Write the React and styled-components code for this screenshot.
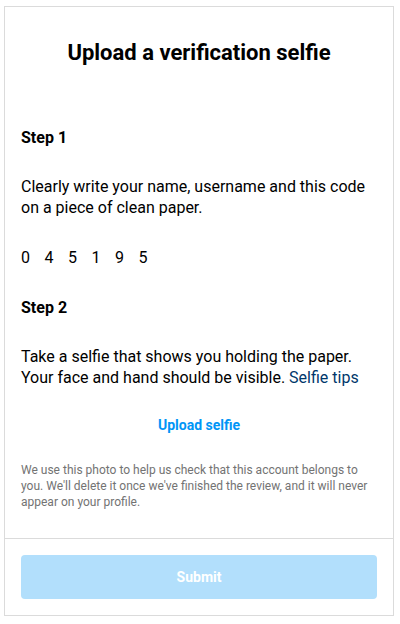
import React from "react";
import styled, { createGlobalStyle } from "styled-components";

const Global = createGlobalStyle`
  body {
    margin: 0;
    background: #fff;
    font-family: Roboto, "Liberation Sans", sans-serif;
    color: #000;
  }
`;

const Page = styled.div`
  padding: 6px 6px 8px 4px;
`;

const Card = styled.div`
  border: 1px solid #dbdbdb;
  height: 610px;
  box-sizing: border-box;
  display: flex;
  flex-direction: column;
`;

const Body = styled.div`
  flex-grow: 1;
  padding: 0 16px;
`;

const Title = styled.h1`
  margin: 0;
  padding: 33px 0 0;
  font-size: 22px;
  font-weight: 700;
  text-align: center;
  line-height: 26px;
`;

const StepTitle = styled.h2`
  margin: ${(p) => p.top}px 0 0;
  font-size: 16px;
  font-weight: 700;
  line-height: 20px;
`;

const Text = styled.p`
  margin: 28px 0 0;
  font-size: 16px;
  line-height: 21px;
`;

const Link = styled.a`
  color: #00376b;
  text-decoration: none;
`;

const Code = styled.div`
  margin-top: 30px;
  font-size: 16px;
  line-height: 20px;
  letter-spacing: 14.5px;
`;

const UploadButton = styled.button`
  display: block;
  margin: 29px auto 0;
  border: 0;
  background: transparent;
  padding: 0;
  font-family: inherit;
  font-size: 14px;
  font-weight: 700;
  color: #0095f6;
  cursor: pointer;
`;

const Note = styled.p`
  margin: 29px 0 0;
  font-size: 12px;
  line-height: 16px;
  color: #737373;
`;

const Footer = styled.div`
  border-top: 1px solid #dbdbdb;
  padding: 16px;
`;

const Submit = styled.button`
  display: block;
  width: 100%;
  height: 44px;
  border: 0;
  border-radius: 4px;
  background: #b2dffc;
  color: #fff;
  font-family: inherit;
  font-size: 14px;
  font-weight: 700;
`;

export default function App() {
  return (
    <Page>
      <Global />
      <Card>
        <Body>
          <Title>Upload a verification selfie</Title>
          <StepTitle top={62}>Step 1</StepTitle>
          <Text>
            Clearly write your name, username and this code on a piece of
            clean paper.
          </Text>
          <Code>045195</Code>
          <StepTitle top={30}>Step 2</StepTitle>
          <Text>
            Take a selfie that shows you holding the paper. Your face and hand
            should be visible. <Link href="#">Selfie tips</Link>
          </Text>
          <UploadButton>Upload selfie</UploadButton>
          <Note>
            We use this photo to help us check that this account belongs to
            you. We'll delete it once we've finished the review, and it will
            never appear on your profile.
          </Note>
        </Body>
        <Footer>
          <Submit disabled>Submit</Submit>
        </Footer>
      </Card>
    </Page>
  );
}
